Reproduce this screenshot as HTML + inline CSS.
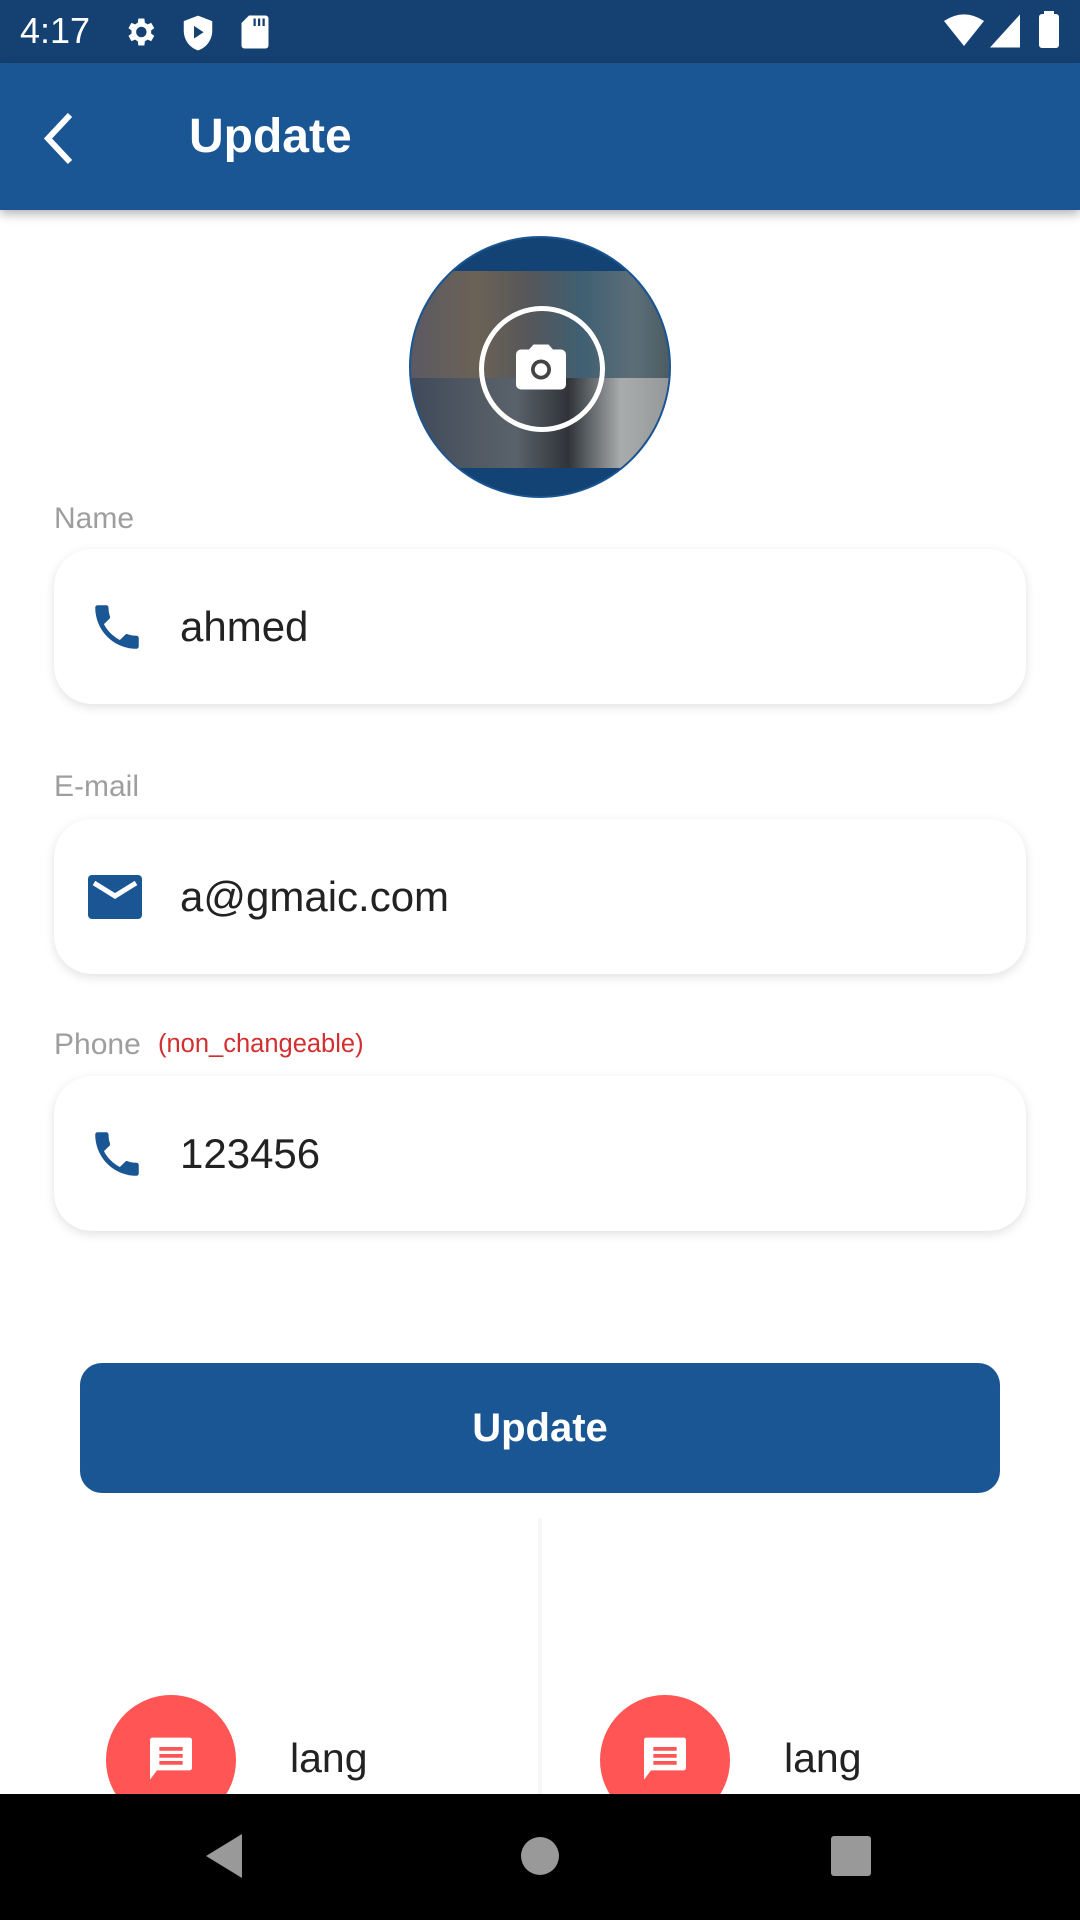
<!DOCTYPE html>
<html><head><meta charset="utf-8"><style>
*{margin:0;padding:0;box-sizing:border-box}
body{width:1080px;height:1920px;overflow:hidden;background:#fff;font-family:"Liberation Sans",Roboto,sans-serif;position:relative}
.abs{position:absolute}
.status{left:0;top:0;width:1080px;height:63px;background:#144072}
.appbar{left:0;top:63px;width:1080px;height:147px;background:#1a5594;box-shadow:0 4px 10px rgba(0,0,0,.3)}
.label{color:#9e9e9e;font-size:30px;left:54px}
.field{left:54px;width:972px;height:155px;background:#fff;border-radius:38px;box-shadow:0 3px 10px rgba(0,0,0,.12)}
.field .t{position:absolute;left:126px;top:50%;transform:translateY(-50%);font-size:42px;color:#222}
.field svg{position:absolute;left:34px;top:50%;transform:translateY(-50%)}
.btn{left:80px;top:1363px;width:920px;height:130px;background:#1a5594;border-radius:22px;color:#fff;font-weight:bold;font-size:40px;text-align:center;line-height:130px}
.circ{width:130px;height:130px;border-radius:50%;background:#ff5555;top:1695px}
.lang{font-size:41px;color:#222;top:1735px}
.nav{left:0;top:1794px;width:1080px;height:126px;background:#000}
</style></head><body>
<div class="abs status">
 <div class="abs" style="left:20px;top:10px;color:#fff;font-size:36px">4:17</div>
 <svg class="abs" style="left:122px;top:14px" width="36" height="36" viewBox="0 0 24 24"><path fill="#fff" d="M19.4 13a7.5 7.5 0 000-2l2.1-1.6-2-3.5-2.5 1a7 7 0 00-1.7-1L14.9 3h-4l-.4 2.9a7 7 0 00-1.7 1l-2.5-1-2 3.5L6.4 11a7.5 7.5 0 000 2l-2.1 1.6 2 3.5 2.5-1a7 7 0 001.7 1l.4 2.9h4l.4-2.9a7 7 0 001.7-1l2.5 1 2-3.5zM12.9 15.5a3.5 3.5 0 110-7 3.5 3.5 0 010 7z"/></svg>
 <svg class="abs" style="left:182px;top:14px" width="32" height="38" viewBox="0 0 20 24"><path fill="#fff" d="M10 1L1 4.5v6c0 6 4 11 9 12.5 5-1.5 9-6.5 9-12.5v-6z"/><path fill="#144072" d="M7.5 7.5v8l6-4z"/></svg>
 <svg class="abs" style="left:240px;top:14px" width="30" height="36" viewBox="0 0 20 24"><path fill="#fff" d="M6 1h11a2 2 0 012 2v18a2 2 0 01-2 2H3a2 2 0 01-2-2V6z"/><path fill="#144072" d="M9 3h1.5v5H9zM12 3h1.5v5H12zM15 3h1.5v5H15z"/></svg>
 <svg class="abs" style="left:944px;top:14px" width="40" height="34" viewBox="0 0 24 20"><path fill="#fff" d="M12 19L0 4Q12-4 24 4z"/></svg>
 <svg class="abs" style="left:990px;top:14px" width="30" height="34" viewBox="0 0 20 22"><path fill="#fff" d="M0 22L20 0v22z"/></svg>
 <div class="abs" style="left:1039px;top:14px;width:20px;height:34px;background:#fff;border-radius:3px"></div>
 <div class="abs" style="left:1044px;top:11px;width:10px;height:5px;background:#fff"></div>
</div>
<div class="abs appbar">
 <svg class="abs" style="left:38px;top:48px" width="40" height="55" viewBox="0 0 40 55"><path d="M32 4L10 27.5 32 51" stroke="#fff" stroke-width="6" fill="none"/></svg>
 <div class="abs" style="left:189px;top:46px;color:#fff;font-size:48px;font-weight:bold">Update</div>
</div>
<div class="abs" style="left:409px;top:236px;width:262px;height:262px;border-radius:50%;background:#134374;border:2px solid #1a5594;overflow:hidden">
 <div class="abs" style="left:0;top:33px;width:262px;height:197px;background:linear-gradient(90deg,#5b5a62 0%,#6b6256 25%,#56575a 45%,#3f5f72 65%,#5c6e78 85%,#4a5a60 100%)"></div>
 <div class="abs" style="left:0;top:140px;width:262px;height:90px;background:linear-gradient(90deg,#3a4658 0%,#59636e 40%,#2d2d30 60%,#b7b7b5 80%,#a0a0a0 100%);opacity:.85"></div>
 <div class="abs" style="left:68px;top:68px;width:126px;height:126px;border-radius:50%;border:5px solid #fff"></div>
 <svg class="abs" style="left:100px;top:99px" width="60" height="60" viewBox="0 0 24 24"><path fill="#fff" d="M9 3L7.2 5H4a2 2 0 00-2 2v12a2 2 0 002 2h16a2 2 0 002-2V7a2 2 0 00-2-2h-3.2L15 3z"/><circle cx="12" cy="13" r="4" fill="#444"/><circle cx="12" cy="13" r="2.5" fill="#fff"/></svg>
</div>
<div class="abs label" style="top:502px">Name</div>
<div class="abs field" style="top:549px">
 <svg width="58" height="58" viewBox="0 0 24 24"><path fill="#1a5594" d="M6.6 10.8c1.4 2.8 3.8 5.1 6.6 6.6l2.2-2.2c.3-.3.7-.4 1-.2 1.1.4 2.3.6 3.6.6.6 0 1 .4 1 1V20c0 .6-.4 1-1 1C10.6 21 3 13.4 3 4c0-.6.4-1 1-1h3.5c.6 0 1 .4 1 1 0 1.3.2 2.5.6 3.6.1.3 0 .7-.2 1z"/></svg>
 <div class="t">ahmed</div>
</div>
<div class="abs label" style="top:770px">E-mail</div>
<div class="abs field" style="top:819px">
 <svg width="54" height="44" viewBox="0 0 54 44"><rect x="0" y="0" width="54" height="44" rx="4" fill="#1a5594"/><path d="M6 8L27 21 48 8" stroke="#fff" stroke-width="5" fill="none"/></svg>
 <div class="t">a@gmaic.com</div>
</div>
<div class="abs label" style="top:1028px">Phone</div>
<div class="abs" style="left:158px;top:1030px;font-size:25.5px;color:#d32f2f">(non_changeable)</div>
<div class="abs field" style="top:1076px">
 <svg width="58" height="58" viewBox="0 0 24 24"><path fill="#1a5594" d="M6.6 10.8c1.4 2.8 3.8 5.1 6.6 6.6l2.2-2.2c.3-.3.7-.4 1-.2 1.1.4 2.3.6 3.6.6.6 0 1 .4 1 1V20c0 .6-.4 1-1 1C10.6 21 3 13.4 3 4c0-.6.4-1 1-1h3.5c.6 0 1 .4 1 1 0 1.3.2 2.5.6 3.6.1.3 0 .7-.2 1z"/></svg>
 <div class="t">123456</div>
</div>
<div class="abs btn">Update</div>
<div class="abs" style="left:538px;top:1518px;width:4px;height:276px;background:#f6f6f6"></div>
<div class="abs circ" style="left:106px"><svg class="abs" style="left:37px;top:38px" width="56" height="56" viewBox="0 0 24 24"><path fill="#fff" d="M4 2h16a1 1 0 011 1v12a1 1 0 01-1 1H6l-3 4V3a1 1 0 011-1z"/><path fill="#ff5555" d="M7 6h10v1.6H7zM7 9h10v1.6H7zM7 12h10v1.6H7z"/></svg></div>
<div class="abs lang" style="left:290px">lang</div>
<div class="abs circ" style="left:600px"><svg class="abs" style="left:37px;top:38px" width="56" height="56" viewBox="0 0 24 24"><path fill="#fff" d="M4 2h16a1 1 0 011 1v12a1 1 0 01-1 1H6l-3 4V3a1 1 0 011-1z"/><path fill="#ff5555" d="M7 6h10v1.6H7zM7 9h10v1.6H7zM7 12h10v1.6H7z"/></svg></div>
<div class="abs lang" style="left:784px">lang</div>
<div class="abs nav">
 <svg class="abs" style="left:204px;top:40px" width="40" height="44" viewBox="0 0 40 44"><path fill="#999" d="M38 0v44L2 22z"/></svg>
 <div class="abs" style="left:521px;top:43px;width:38px;height:38px;border-radius:50%;background:#999"></div>
 <div class="abs" style="left:831px;top:42px;width:40px;height:40px;border-radius:3px;background:#999"></div>
</div>
</body></html>
